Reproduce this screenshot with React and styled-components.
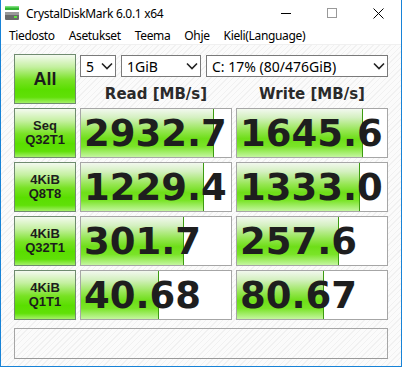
import React from "react";
import styled, { createGlobalStyle } from "styled-components";

const GlobalStyle = createGlobalStyle`
  body {
    margin: 0;
    background: #ffffff;
  }
`;

const uiFont = `"Noto Sans", "Open Sans", sans-serif`;
const boldFont = `"DejaVu Sans", Verdana, sans-serif`;

const Window = styled.div`
  width: 402px;
  height: 367px;
  box-sizing: border-box;
  border: 1px solid #1883d7;
  border-top: none;
  background: #ffffff;
  display: flex;
  flex-direction: column;
  overflow: hidden;
  font-family: ${uiFont};
`;

const TitleBar = styled.div`
  display: flex;
  align-items: center;
  height: 26px;
  flex-shrink: 0;
`;

const AppIcon = styled.svg`
  width: 16px;
  height: 16px;
  margin: 0 6px 0 3px;
  flex-shrink: 0;
`;

const Title = styled.div`
  flex: 1;
  font-size: 12px;
  letter-spacing: -0.3px;
  color: #000;
  white-space: nowrap;
`;

const Caption = styled.div`
  width: 46px;
  height: 26px;
  display: flex;
  align-items: center;
  justify-content: center;
`;

const MenuBar = styled.div`
  display: flex;
  height: 18px;
  align-items: center;
  flex-shrink: 0;
  padding-left: 1px;
  border-bottom: 1px solid #f0f0f0;
`;

const MenuItem = styled.span`
  font-size: 12px;
  letter-spacing: -0.35px;
  color: #000;
  padding: 0 7px;
`;

const Client = styled.div`
  flex: 1;
  padding: 9px 13px 0 13px;
  background: repeating-linear-gradient(
    135deg,
    #fbfbfb 0px,
    #fbfbfb 3px,
    #f1f1f1 3px,
    #f1f1f1 4px
  );
`;

const Grid = styled.div`
  display: grid;
  grid-template-columns: 62px 152px 152px;
  grid-auto-rows: 50px;
  column-gap: 4px;
  row-gap: 4px;
`;

const GreenButton = styled.div`
  box-sizing: border-box;
  border: 1px solid #6f8b6f;
  background: linear-gradient(
    to bottom,
    #f4faf0 0%,
    #c4f0a0 25%,
    #78e224 52%,
    #5ade00 72%,
    #60e008 88%,
    #a4f068 100%
  );
  display: flex;
  flex-direction: column;
  align-items: center;
  justify-content: center;
  color: #1c1c1c;
  font-family: "Liberation Sans", Arial, sans-serif;
  font-weight: bold;
  font-size: ${(p) => (p.$big ? "18px" : "13px")};
  line-height: ${(p) => (p.$big ? "20px" : "14px")};
  text-align: center;
`;

const TopArea = styled.div`
  grid-column: 2 / 4;
  display: flex;
  flex-direction: column;
`;

const SelectRow = styled.div`
  display: flex;
  gap: 5px;
  margin-top: 1px;
`;

const Select = styled.div`
  box-sizing: border-box;
  width: ${(p) => p.$w}px;
  height: 22px;
  border: 1px solid #7a7a7a;
  background: #fff;
  display: flex;
  align-items: center;
  justify-content: space-between;
  padding: 0 2px 0 5px;
  font-size: 14px;
  color: #000;
  white-space: nowrap;
`;

const Chevron = styled.svg`
  width: 12px;
  height: 8px;
  flex-shrink: 0;
`;

const Headers = styled.div`
  display: grid;
  grid-template-columns: 152px 152px;
  column-gap: 4px;
  flex: 1;
  align-items: center;
`;

const Header = styled.div`
  text-align: center;
  font-family: ${boldFont};
  font-weight: bold;
  font-size: 15px;
  color: #2a2a2a;
  padding-top: 7px;
`;

const ValueBox = styled.div`
  position: relative;
  box-sizing: border-box;
  border: 1px solid #a6a6a6;
  background: #fff;
  overflow: hidden;
  display: flex;
  align-items: center;
`;

const Bar = styled.div`
  position: absolute;
  left: 0;
  top: 0;
  bottom: 0;
  border-right: 1px solid #3c9a10;
  background: linear-gradient(
    to bottom,
    #f2f8ee 0%,
    #d4f0c0 18%,
    #94e650 45%,
    #6ede18 62%,
    #7ae428 78%,
    #c4f6a0 100%
  );
`;

const Value = styled.span`
  position: relative;
  padding-left: 3px;
  font-family: ${boldFont};
  font-weight: bold;
  font-size: 37px;
  line-height: 1;
  color: #1e1e1e;
  white-space: nowrap;
`;

const Comment = styled.div`
  box-sizing: border-box;
  margin-top: 8px;
  height: 31px;
  border: 1px solid #a6a6a6;
  border-bottom-color: #9a9a9a;
  background: transparent;
`;

const rows = [
  { l1: "Seq", l2: "Q32T1", read: "2932.7", rp: 88, write: "1645.6", wp: 83 },
  { l1: "4KiB", l2: "Q8T8", read: "1229.4", rp: 81, write: "1333.0", wp: 81 },
  { l1: "4KiB", l2: "Q32T1", read: "301.7", rp: 68, write: "257.6", wp: 67 },
  { l1: "4KiB", l2: "Q1T1", read: "40.68", rp: 51, write: "80.67", wp: 57 },
];

const ChevronIcon = () => (
  <Chevron viewBox="0 0 12 8">
    <path d="M1 1.5 L6 6.5 L11 1.5" fill="none" stroke="#222" strokeWidth="1.6" />
  </Chevron>
);

const Result = ({ value, pct }) => (
  <ValueBox>
    <Bar style={{ width: `${pct}%` }} />
    <Value>{value}</Value>
  </ValueBox>
);

export default function App() {
  return (
    <>
      <GlobalStyle />
      <Window>
        <TitleBar>
          <AppIcon viewBox="0 0 16 16">
            <rect x="1" y="1" width="14" height="4" fill="#2fb52f" />
            <rect x="1" y="1" width="14" height="1.5" fill="#7ee07e" />
            <rect x="1" y="7" width="14" height="8" rx="1" fill="#6a6a6a" />
            <rect x="1" y="7" width="14" height="3" fill="#9a9a9a" />
            <rect x="10" y="11" width="3" height="2" fill="#5fe040" />
          </AppIcon>
          <Title>CrystalDiskMark 6.0.1 x64</Title>
          <Caption>
            <svg width="10" height="10" viewBox="0 0 10 10">
              <path d="M0 5.5 H10" stroke="#000" strokeWidth="1" />
            </svg>
          </Caption>
          <Caption>
            <svg width="10" height="10" viewBox="0 0 10 10">
              <rect x="0.5" y="0.5" width="9" height="9" fill="none" stroke="#999" strokeWidth="1" />
            </svg>
          </Caption>
          <Caption>
            <svg width="11" height="11" viewBox="0 0 11 11">
              <path d="M0.5 0.5 L10.5 10.5 M10.5 0.5 L0.5 10.5" stroke="#000" strokeWidth="1" />
            </svg>
          </Caption>
        </TitleBar>
        <MenuBar>
          <MenuItem>Tiedosto</MenuItem>
          <MenuItem>Asetukset</MenuItem>
          <MenuItem>Teema</MenuItem>
          <MenuItem>Ohje</MenuItem>
          <MenuItem>Kieli(Language)</MenuItem>
        </MenuBar>
        <Client>
          <Grid>
            <GreenButton $big>All</GreenButton>
            <TopArea>
              <SelectRow>
                <Select $w={36}>
                  <span>5</span>
                  <ChevronIcon />
                </Select>
                <Select $w={80}>
                  <span>1GiB</span>
                  <ChevronIcon />
                </Select>
                <Select $w={182}>
                  <span>C: 17% (80/476GiB)</span>
                  <ChevronIcon />
                </Select>
              </SelectRow>
              <Headers>
                <Header>Read [MB/s]</Header>
                <Header>Write [MB/s]</Header>
              </Headers>
            </TopArea>
            {rows.map((r, i) => (
              <React.Fragment key={i}>
                <GreenButton>
                  <span>{r.l1}</span>
                  <span>{r.l2}</span>
                </GreenButton>
                <Result value={r.read} pct={r.rp} />
                <Result value={r.write} pct={r.wp} />
              </React.Fragment>
            ))}
          </Grid>
          <Comment />
        </Client>
      </Window>
    </>
  );
}
